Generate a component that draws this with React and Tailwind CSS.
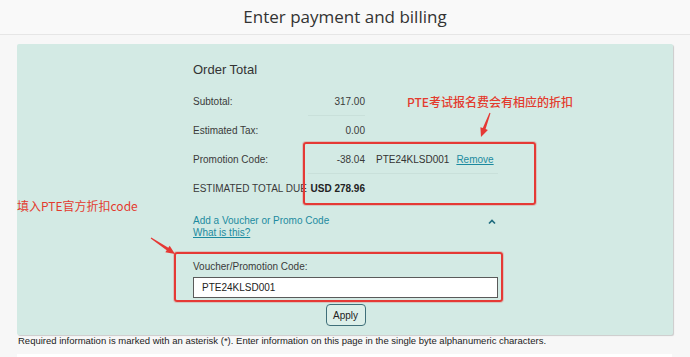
import React from "react";

const sans = { fontFamily: '"Liberation Sans", Arial, sans-serif' };

function Row({ label, value, bold, extra, line }) {
  return (
    <div className="grid grid-cols-[115px_57px_1fr] h-[29px] items-center">
      <div className="text-[10px] text-[#3a3a3a] whitespace-nowrap">{label}</div>
      <div
        className={`text-right text-[10px] h-full flex items-center justify-end ${bold ? "font-bold text-[#222]" : "text-[#3a3a3a]"} ${line ? "border-b border-[#c9e0da]" : ""}`}
      >
        {value}
      </div>
      <div className={`h-full flex items-center ${extra ? "border-b border-[#c9e0da]" : ""}`}>{extra}</div>
    </div>
  );
}

export default function App() {
  return (
    <div className="relative w-[690px] h-[357px] overflow-hidden bg-[#f7f7f7]" style={sans}>
      <div
        className="h-[35px] border-b border-[#e6e6e6] flex items-center justify-center text-[17px] text-[#333] bg-[#f9f9f9]"
        style={{ fontFamily: '"Open Sans", sans-serif' }}
      >
        Enter payment and billing
      </div>
      <div className="px-[17px] pt-[9px]">
        <div className="h-[291px] bg-[#d3eae4] rounded-[2px] shadow-[1px_1px_1px_rgba(0,0,0,0.18)] pl-[176px]">
          <div className="w-[305px]">
            <div className="pt-[18px] text-[13px] leading-[16px] text-[#333]">Order Total</div>
            <div className="mt-[9px]">
              <Row label="Subtotal:" value="317.00" line />
              <Row label="Estimated Tax:" value="0.00" />
              <Row
                label="Promotion Code:"
                value="-38.04"
                line
                extra={
                  <div className="flex items-center text-[10px] pl-[11px] w-full">
                    <span className="text-[#333]">PTE24KLSD001</span>
                    <span className="ml-[7px] text-[#1c8a9f] underline">Remove</span>
                  </div>
                }
              />
              <Row label="ESTIMATED TOTAL DUE" value="USD 278.96" bold />
            </div>
            <div className="mt-[12px] flex items-center justify-between text-[10px] leading-[12px] text-[#1c8a9f]">
              <span>Add a Voucher or Promo Code</span>
              <svg width="10" height="7" viewBox="0 0 10 7" className="mr-[1px]">
                <path d="M2 5.5 L5 2.5 L8 5.5" fill="none" stroke="#1f6c7e" strokeWidth="1.7" />
              </svg>
            </div>
            <div className="text-[10px] leading-[12px] text-[#1c8a9f] underline">What is this?</div>
            <div className="mt-[22px] text-[10px] leading-[12px] text-[#3a3a3a]">Voucher/Promotion Code:</div>
            <div className="mt-[4px] h-[21px] bg-white border border-[#5a5a5a] flex items-center pl-[8px] text-[10px] text-[#222]">
              PTE24KLSD001
            </div>
            <div className="flex justify-center mt-[6px]">
              <button className="w-[40px] h-[22px] rounded-[4px] border border-[#3f6f79] bg-[#dcefe9] text-[10px] text-[#222]">
                Apply
              </button>
            </div>
          </div>
        </div>
        <div className="text-[9.5px] leading-[12px] text-[#222] pl-[1px]">
          Required information is marked with an asterisk (*). Enter information on this page in the single byte alphanumeric characters.
        </div>
        <div className="mt-[7px] h-[20px] bg-white mr-[1px]"></div>
      </div>

      {/* annotations */}
      <div className="absolute left-[303px] top-[142px] w-[233px] h-[63px] border-2 border-[#e53935] rounded-[3px] shadow-[0_0_0_1px_rgba(229,57,53,0.22)]"></div>
      <div className="absolute left-[174px] top-[252px] w-[329px] h-[50px] border-2 border-[#e53935] rounded-[3px] shadow-[0_0_0_1px_rgba(229,57,53,0.22)]"></div>
      <div
        className="absolute left-[407px] top-[94px] text-[12px] leading-[16px] font-medium text-[#e33b2e] whitespace-nowrap"
        style={{ fontFamily: '"Noto Sans CJK SC", "Noto Sans", sans-serif' }}
      >
        PTE考试报名费会有相应的折扣
      </div>
      <div
        className="absolute left-[17px] top-[198px] text-[12px] leading-[16px] font-normal text-[#e33b2e] whitespace-nowrap"
        style={{ fontFamily: '"Noto Sans CJK SC", "Noto Sans", sans-serif' }}
      >
        填入PTE官方折扣code
      </div>
      <svg className="absolute left-0 top-0 pointer-events-none" width="690" height="357" viewBox="0 0 690 357">
        <polygon
          points="490.5,113.2 485.6,129.1 487.9,130.0 481,137 480.4,127.2 482.8,128.1 489.5,112.8"
          fill="#e53935"
        />
        <polygon
          points="151.3,237.6 168.3,247.8 169.7,245.7 175,254 165.3,252.3 166.7,250.2 150.7,238.4"
          fill="#e53935"
        />
      </svg>
    </div>
  );
}
